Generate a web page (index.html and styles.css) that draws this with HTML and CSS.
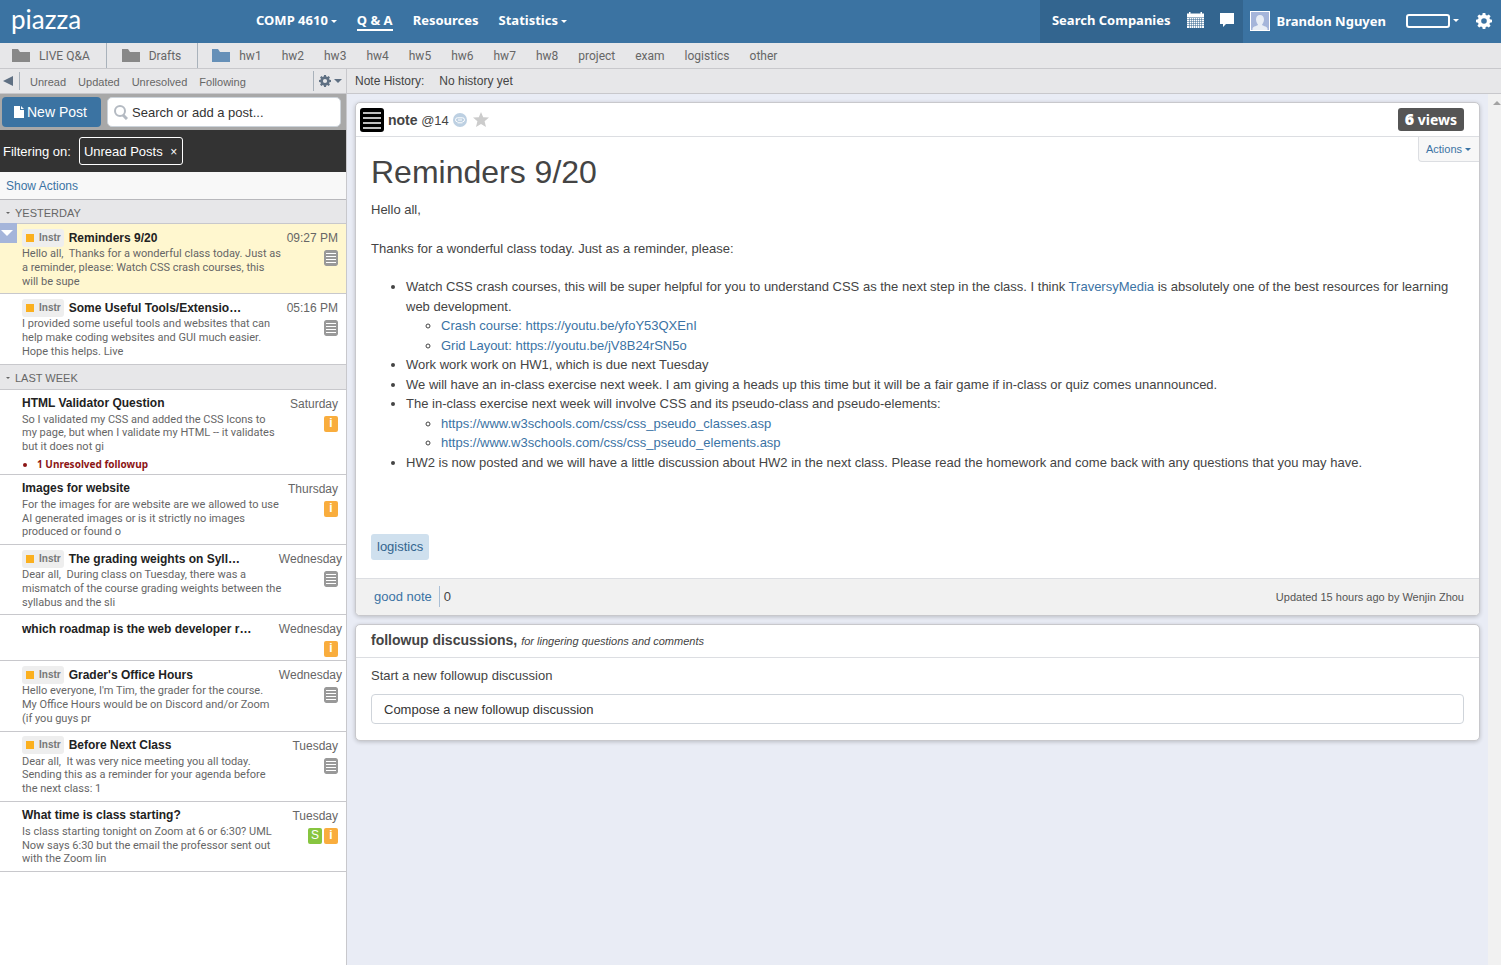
FILE: index.html
```html
<!DOCTYPE html>
<html lang="en">
<head>
<meta charset="utf-8">
<title>COMP 4610 - Piazza</title>
<link rel="stylesheet" href="styles.css">
</head>
<body>
<svg class="defs" aria-hidden="true">
  <symbol id="folder" viewBox="0 0 18 13"><path d="M0 0h6l2 3h10v10H0z"/></symbol>
  <symbol id="gear" viewBox="0 0 16 16"><path fill-rule="evenodd" d="M6.7 0h2.6l.4 2 1.4.6L12.800 1.400l1.800 1.800L13.400 4.900l.6 1.400 2 .4v2.600l-2 .4-.6 1.400 1.200 1.700-1.800 1.800-1.700-1.200-1.400.6-.4 2H6.700l-.4-2-1.400-.6-1.700 1.200-1.800-1.800 1.200-1.700L2 9.700l-2-.4V6.700l2-.4.6-1.400L1.400 3.200l1.800-1.800 1.700 1.200L6.300 2zM8 5.200a2.800 2.800 0 1 0 0 5.600 2.800 2.800 0 0 0 0-5.600z"/></symbol>
  <symbol id="note" viewBox="0 0 14 16"><rect width="14" height="16" rx="2" fill="#999"/><path d="M2 3.500h10M2 6.500h10M2 9.500h10M2 12.500h10" stroke="#fff"/></symbol>
</svg>

<header class="topbar">
  <a class="logo" href="#">piazza</a>
  <nav class="mainnav">
    <button class="navlink">COMP 4610<i class="caret"></i></button>
    <a class="navlink current" href="#">Q &amp; A</a>
    <a class="navlink" href="#">Resources</a>
    <button class="navlink">Statistics<i class="caret"></i></button>
  </nav>
  <div class="careers">
    <a href="#">Search Companies</a>
    <button aria-label="Calendar"><svg width="17" height="16" viewBox="0 0 17 16"><path fill="#fff" d="M0 1.500h2V0h1.500v1.500h10V0H15v1.500h2V5H0zM0 5.500h17V16H0z"/><path d="M0 7.500h17M0 9.500h17M0 11.500h17M0 13.500h17M2.500 6v10M4.500 6v10M6.500 6v10M8.500 6v10M10.500 6v10M12.500 6v10M14.500 6v10" stroke="#33658f" stroke-width=".5"/></svg></button>
    <button aria-label="Messages"><svg width="14" height="14" viewBox="0 0 14 14"><path fill="#fff" d="M0 0h14v11H6l-3 3v-3H0z"/></svg></button>
  </div>
  <div class="account">
    <svg class="avatar" width="20" height="20" viewBox="0 0 20 20"><path fill="#fff" d="M0 0h20v20H0z"/><path fill="#a5b5da" d="M1 1h18v18H1z"/><path fill="#e8edf5" d="M10 4c2.600 0 4 1.800 4 4.500S12.500 13 12 13.500c0 1.500 5 1.500 5.500 4V19h-15v-1.500c.5-2.500 5.500-2.500 5.500-4C7.500 13 6 11.200 6 8.500S7.400 4 10 4z"/></svg>
    <span class="username">Brandon Nguyen</span>
    <button class="role" aria-label="Switch view"><span class="rolebox"></span><i class="caret"></i></button>
    <button aria-label="Settings"><svg width="16" height="16" fill="#fff"><use href="#gear"/></svg></button>
  </div>
</header>

<nav class="folders">
  <a class="group" href="#"><svg class="folder"><use href="#folder"/></svg>LIVE Q&amp;A</a>
  <a class="group" href="#"><svg class="folder"><use href="#folder"/></svg>Drafts</a>
  <div class="tags">
    <svg class="folder blue"><use href="#folder"/></svg>
    <a href="#">hw1</a><a href="#">hw2</a><a href="#">hw3</a><a href="#">hw4</a><a href="#">hw5</a><a href="#">hw6</a><a href="#">hw7</a><a href="#">hw8</a><a href="#">project</a><a href="#">exam</a><a href="#">logistics</a><a href="#">other</a>
  </div>
</nav>

<div class="columns">
<aside class="feed">
  <div class="filters">
    <button class="collapse" aria-label="Hide feed"><svg width="10" height="10" fill="#5f7083"><path d="M10 0v10L0 5z"/></svg></button>
    <div class="filterlinks"><a href="#">Unread</a><a href="#">Updated</a><a href="#">Unresolved</a><a href="#">Following</a></div>
    <button class="feedgear" aria-label="Feed settings"><svg width="12" height="12" viewBox="0 0 16 16" fill="#5f7083"><use href="#gear"/></svg><i class="caret wide"></i></button>
  </div>
  <div class="searchrow">
    <button class="newpost"><svg width="10" height="12" viewBox="0 0 10 12" fill="#fff"><path d="M0 0h6v4h4v8H0zM7 0l3 3H7z"/></svg>New Post</button>
    <label class="search"><svg width="14" height="15" viewBox="0 0 14 15" fill="none" stroke="#b4bac2"><circle cx="6" cy="6" r="5" stroke-width="2"/><path d="M9 10l4 4" stroke-width="3"/></svg><input type="text" aria-label="Search or add a post" placeholder="Search or add a post..."></label>
  </div>
  <div class="filtering">Filtering on: <button>Unread Posts <span>×</span></button></div>
  <div class="showactions"><a href="#">Show Actions</a></div>

  <h2 class="bucket"><i class="caret"></i>YESTERDAY</h2>
  <article class="post selected">
    <button class="marker" aria-label="Post options"><svg width="12" height="6" fill="#fff"><path d="M0 0h12L6 6z"/></svg></button>
    <div class="text"><h3><span class="instr">Instr</span>Reminders 9/20</h3>
    <p>Hello all,&nbsp; Thanks for a wonderful class today. Just as<br>a reminder, please: Watch CSS crash courses, this<br>will be supe</p></div>
    <div class="meta"><time>09:27 PM</time><svg class="badge"><use href="#note"/></svg></div>
  </article>
  <article class="post">
    <div class="text"><h3><span class="instr">Instr</span>Some Useful Tools/Extensio…</h3>
    <p>I provided some useful tools and websites that can<br>help make coding websites and GUI much easier.<br>Hope this helps. Live</p></div>
    <div class="meta"><time>05:16 PM</time><svg class="badge"><use href="#note"/></svg></div>
  </article>
  <h2 class="bucket"><i class="caret"></i>LAST WEEK</h2>
  <article class="post">
    <div class="text"><h3>HTML Validator Question</h3>
    <p>So I validated my CSS and added the CSS Icons to<br>my page, but when I validate my HTML -- it validates<br>but it does not gi</p>
    <ul class="unresolved"><li>1 Unresolved followup</li></ul></div>
    <div class="meta"><time>Saturday</time><span class="badge info">i</span></div>
  </article>
  <article class="post">
    <div class="text"><h3>Images for website</h3>
    <p>For the images for are website are we allowed to use<br>AI generated images or is it strictly no images<br>produced or found o</p></div>
    <div class="meta"><time>Thursday</time><span class="badge info">i</span></div>
  </article>
  <article class="post">
    <div class="text"><h3><span class="instr">Instr</span>The grading weights on Syll…</h3>
    <p>Dear all,&nbsp; During class on Tuesday, there was a<br>mismatch of the course grading weights between the<br>syllabus and the sli</p></div>
    <div class="meta long"><time>Wednesday</time><svg class="badge"><use href="#note"/></svg></div>
  </article>
  <article class="post">
    <div class="text"><h3>which roadmap is the web developer r…</h3></div>
    <div class="meta long"><time>Wednesday</time><span class="badge info">i</span></div>
  </article>
  <article class="post">
    <div class="text"><h3><span class="instr">Instr</span>Grader's Office Hours</h3>
    <p>Hello everyone, I'm Tim, the grader for the course.<br>My Office Hours would be on Discord and/or Zoom<br>(if you guys pr</p></div>
    <div class="meta long"><time>Wednesday</time><svg class="badge"><use href="#note"/></svg></div>
  </article>
  <article class="post">
    <div class="text"><h3><span class="instr">Instr</span>Before Next Class</h3>
    <p>Dear all,&nbsp; It was very nice meeting you all today.<br>Sending this as a reminder for your agenda before<br>the next class: 1</p></div>
    <div class="meta"><time>Tuesday</time><svg class="badge"><use href="#note"/></svg></div>
  </article>
  <article class="post">
    <div class="text"><h3>What time is class starting?</h3>
    <p>Is class starting tonight on Zoom at 6 or 6:30? UML<br>Now says 6:30 but the email the professor sent out<br>with the Zoom lin</p></div>
    <div class="meta"><time>Tuesday</time><div class="badges"><span class="badge student">S</span><span class="badge info">i</span></div></div>
  </article>
</aside>

<main class="main">
  <div class="history"><span>Note History:</span><span>No history yet</span></div>
  <div class="scrollarea">
    <div class="content">
      <section class="card">
        <header class="cardhead">
          <svg width="24" height="24" viewBox="0 0 24 24"><rect width="24" height="24" rx="3"/><path d="M3 5h18M3 10h18M3 15h18M3 20h18" stroke="#fff" stroke-width="1.500"/></svg>
          <span class="cid"><b>note</b> @14</span>
          <svg width="14" height="14" viewBox="0 0 14 14"><circle cx="7" cy="7" r="7" fill="#bdd0e2"/><path d="M4.500 8.800a2 2 0 0 1-2-2 2 2 0 0 1 2-2h5a2 2 0 0 1 2 2 2 2 0 0 1-2 2M5 7h4M4.500 9.800h5" fill="none" stroke="#fff"/></svg>
          <svg class="star" width="16" height="15" viewBox="0 0 16 15" fill="#ccc"><path d="M8 0l2.200 5.200 5.800.4-4.400 3.700L13 15l-5-3.100L3 15l1.400-5.700L0 5.600l5.800-.4z"/></svg>
          <span class="views"><b>6</b> views</span>
        </header>
        <div class="cardbody">
          <button class="actions">Actions<i class="caret"></i></button>
          <h1>Reminders 9/20</h1>
          <p>Hello all,</p>
          <p>Thanks for a wonderful class today. Just as a reminder, please:</p>
          <ul>
            <li>Watch CSS crash courses, this will be super helpful for you to understand CSS as the next step in the class. I think <a href="#">TraversyMedia</a> is absolutely one of the best resources for learning web development.
              <ul>
                <li><a href="#">Crash course: https://youtu.be/yfoY53QXEnI</a></li>
                <li><a href="#">Grid Layout: https://youtu.be/jV8B24rSN5o</a></li>
              </ul></li>
            <li>Work work work on HW1, which is due next Tuesday</li>
            <li>We will have an in-class exercise next week. I am giving a heads up this time but it will be a fair game if in-class or quiz comes unannounced.</li>
            <li>The in-class exercise next week will involve CSS and its pseudo-class and pseudo-elements:
              <ul>
                <li><a href="#">https://www.w3schools.com/css/css_pseudo_classes.asp</a></li>
                <li><a href="#">https://www.w3schools.com/css/css_pseudo_elements.asp</a></li>
              </ul></li>
            <li>HW2 is now posted and we will have a little discussion about HW2 in the next class. Please read the homework and come back with any questions that you may have.</li>
          </ul>
          <a class="tag" href="#">logistics</a>
        </div>
        <footer class="cardfoot">
          <a href="#">good note</a><span class="count">0</span>
          <span class="updated">Updated 15 hours ago by Wenjin Zhou</span>
        </footer>
      </section>
      <section class="card followups">
        <header class="followhead"><b>followup discussions,</b> <em>for lingering questions and comments</em></header>
        <div class="compose">
          <label for="compose">Start a new followup discussion</label>
          <input id="compose" type="text" placeholder="Compose a new followup discussion">
        </div>
      </section>
    </div>
    <div class="scrollbar"><svg width="8" height="4" fill="#a3a3a3"><path d="M4 0l4 4H0z"/></svg></div>
  </div>
</main>
</div>
</body>
</html>
```

FILE: styles.css
```css
* { box-sizing: border-box; }
html, body { height: 100%; }
body {
  margin: 0;
  display: flex;
  flex-direction: column;
  font-family: "Liberation Sans", Arial, sans-serif;
  font-size: 13px;
  color: #444;
  background: #e9ecf5;
}
a { color: #3b73a4; text-decoration: none; }
button { font: inherit; color: inherit; background: none; border: 0; padding: 0; cursor: pointer; }
input { font: inherit; }
h1, h2, h3, p, ul { margin: 0; font-weight: normal; }
svg { display: block; flex: none; }
.defs { position: absolute; width: 0; height: 0; }
.caret {
  display: inline-block;
  border: 3px solid transparent;
  border-top-color: currentColor;
  border-bottom: 0;
  vertical-align: middle;
  margin-left: 3px;
}
.caret.wide { border-width: 4px; border-bottom: 0; }

/* top bar */
.topbar {
  display: flex;
  align-items: stretch;
  height: 43px;
  flex: none;
  background: #3b73a2;
  color: #fff;
  font: bold 13px "Noto Sans", Tahoma, sans-serif;
}
.topbar a { color: #fff; }
.logo { width: 244px; padding: 4px 0 0 11px; font: 26px/30px Lato, sans-serif; }
.mainnav { display: flex; flex: 1; align-items: center; gap: 20px; padding: 0 0 3px 12px; }
.navlink { line-height: 18px; }
.navlink.current { border-bottom: 2px solid #fff; margin-top: 2px; }
.careers { display: flex; gap: 16px; align-items: center; padding: 0 9px 3px 12px; background: #33658f; }
.account { display: flex; align-items: center; padding: 0 9px 2px 7px; }
.username { margin: 0 20px 0 7px; }
.role { display: flex; align-items: center; margin-right: 17px; }
.rolebox { width: 44px; height: 14px; border: 2px solid #fff; border-radius: 3px; }

/* folder bar */
.folders {
  display: flex;
  height: 26px;
  flex: none;
  border-bottom: 1px solid #c8c8cc;
  background: #e7e7e9;
  font: 12px Roboto, Tahoma, sans-serif;
}
.folders a { color: #666; }
.folder { width: 18px; height: 13px; fill: #888; }
.folder.blue { fill: #6690b8; margin-right: -11px; }
.group { display: flex; align-items: center; gap: 9px; padding: 0 16px 0 15px; border-right: 1px solid #a9b2bb; }
.group:first-child { padding-left: 12px; }
.tags { display: flex; align-items: center; gap: 20px; padding-left: 14px; }

.columns { display: flex; flex: 1; min-height: 0; }

/* feed */
.feed { width: 347px; flex: none; background: #fff; border-right: 1px solid #c8c8cc; }
.filters { display: flex; align-items: center; height: 25px; border-bottom: 1px solid #c8c8cc; background: #e7e7e9; font-size: 11px; }
.filters a { color: #666; }
.collapse { padding: 0 6px 0 3px; }
.filterlinks { display: flex; flex: 1; gap: 12px; padding: 4px 0 2px 10px; border-left: 1px solid #a9b2bb; }
.feedgear { display: flex; align-items: center; height: 20px; padding: 0 4px 0 5px; border-left: 1px solid #a9b2bb; color: #5f7083; }
.searchrow { display: flex; gap: 6px; padding: 3px 5px 3px 2px; height: 36px; background: #a8a8a8; }
.newpost { display: flex; align-items: center; gap: 3px; width: 99px; padding: 0 12px; border-radius: 4px; background: #3b73a2; color: #fff; font-size: 14px; white-space: nowrap; }
.search { display: flex; flex: 1; align-items: center; gap: 4px; padding-left: 6px; border: 1px solid #ccd3da; border-radius: 5px; background: #fff; }
.search input { flex: 1; min-width: 0; border: 0; padding: 0; outline: 0; background: none; }
.search input::placeholder, .compose input::placeholder { color: #333; opacity: 1; }
.filtering { display: flex; align-items: center; gap: 8px; height: 42px; padding: 0 3px; background: #333; color: #fff; }
.filtering button { height: 28px; padding: 0 5px 0 4px; border: 1px solid #fff; border-radius: 3px; }
.filtering button span { margin-left: 4px; font-size: 12px; }
.showactions { height: 28px; padding: 7px 6px 6px; border-bottom: 1px solid #b8b8bc; background: #f8f8f8; font-size: 12px; }
.bucket { display: flex; align-items: center; gap: 5px; height: 24px; padding: 2px 0 0 3px; border-bottom: 1px solid #c8c8cc; background: #e7e7e9; color: #666; font-size: 11px; }
.bucket .caret { border-width: 2px; border-bottom: 0; }
.post + .bucket { height: 25px; }
.post { position: relative; display: flex; padding: 4px 8px 3px 22px; border-bottom: 1px solid #c8c8cc; white-space: nowrap; }
.post.selected { background: #fff7cf; }
.marker { position: absolute; left: 0; top: -1px; width: 17px; height: 20px; padding: 0 1px; background: #a5b5da; }
.text { flex: 1; min-width: 0; }
.post h3 { display: flex; align-items: center; gap: 5px; height: 19px; color: #222; font-size: 12px; font-weight: bold; }
.post p { padding-bottom: 2px; color: #666; font: 11px/1.25 Roboto, Tahoma, sans-serif; }
.instr { display: flex; align-items: center; gap: 5px; height: 18px; padding: 0 3px 1px 4px; border-radius: 3px; background: #eee; color: #777; font-size: 10px; }
.instr::before { content: ""; width: 8px; height: 8px; margin-top: 1px; background: #fbb01f; }
.unresolved { padding: 1px 0 0 15px; color: #8c1515; font: bold 10px/14px "Noto Sans", Tahoma, sans-serif; }
.meta { display: flex; flex-direction: column; align-items: flex-end; gap: 5px; padding-top: 3px; color: #666; font-size: 12px; }
.meta time { line-height: 14px; }
.meta.long time { margin-right: -4px; }
.badges { display: flex; gap: 2px; }
.badge { width: 14px; height: 16px; border-radius: 2px; color: #fff; text-align: center; font: bold 12px/15px "Liberation Sans", Arial, sans-serif; }
.info { background: #f9ad3d; }
.student { background: #87c540; font-weight: normal; }

/* main pane */
.main { display: flex; flex: 1; flex-direction: column; min-width: 0; }
.history { display: flex; gap: 15px; align-items: center; height: 25px; flex: none; padding-left: 8px; border-bottom: 1px solid #c8c8cc; background: #e7e7e9; font-size: 12px; }
.scrollarea { display: flex; flex: 1; min-height: 0; }
.content { flex: 1; min-width: 0; padding: 8px; }
.scrollbar { width: 13px; flex: none; padding: 7px 0 0 5px; background: #f1f1f1; }
.card { margin-bottom: 8px; border: 1px solid #c8c8cc; border-radius: 5px; background: #fff; box-shadow: 0 1px 4px rgba(0, 0, 0, .2); overflow: hidden; }
.cardhead { display: flex; align-items: center; gap: 4px; height: 34px; padding: 0 15px 0 4px; border-bottom: 1px solid #dcdee2; }
.cid b { font-size: 14px; }
.star { margin-left: 2px; }
.views { margin-left: auto; padding: 0 7px; border-radius: 3px; background: #555; color: #fff; font: bold 14px/22px "Noto Sans", sans-serif; }
.views b { font-size: 16px; }
.cardbody { position: relative; padding: 13px 15px 18px; line-height: 1.5; }
.actions { position: absolute; right: 0; top: 0; height: 25px; padding: 0 8px 0 7px; border: solid #dcdee2; border-width: 0 0 1px 1px; border-radius: 0 0 0 4px; background: #f7f7f7; color: #3b73a4; font-size: 11px; }
.cardbody h1 { margin-bottom: 6px; font-size: 32px; line-height: 44px; }
.cardbody p { margin-bottom: 19px; }
.cardbody ul { padding-left: 35px; }
.tag { display: inline-block; margin-top: 62px; padding: 3px 6px; border-radius: 3px; background: #cfe0ee; line-height: 20px; color: #33658f; }
.cardfoot { display: flex; align-items: center; height: 37px; padding: 0 15px 1px 18px; border-top: 1px solid #dcdee2; background: #f1f1f1; }
.count { margin-left: 7px; padding: 3px 4px; border-left: 1px solid #a9bfd6; }
.updated { margin-left: auto; font-size: 11px; color: #555; }
.followhead { height: 33px; padding: 7px 15px; border-bottom: 1px solid #dcdee2; font-size: 14px; }
.followhead em { font-size: 11px; }
.compose { display: flex; flex-direction: column; gap: 11px; padding: 10px 15px 16px; }
.compose input { height: 30px; padding: 0 12px; border: 1px solid #cfd4da; border-radius: 4px; }
```
